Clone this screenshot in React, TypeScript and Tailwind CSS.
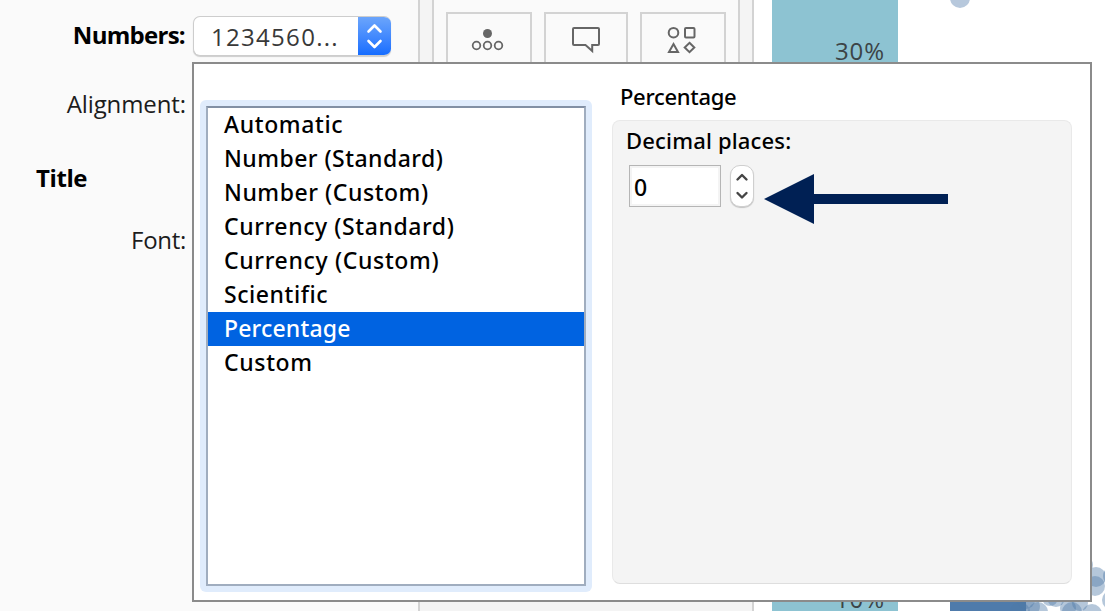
const formats = [
  { name: 'Automatic', tracking: 'tracking-[0.62px]' },
  { name: 'Number (Standard)', tracking: 'tracking-[0.46px]' },
  { name: 'Number (Custom)', tracking: 'tracking-[0.55px]' },
  { name: 'Currency (Standard)', tracking: 'tracking-[0.58px]' },
  { name: 'Currency (Custom)', tracking: 'tracking-[0.65px]' },
  { name: 'Scientific', tracking: 'tracking-[0.55px]' },
  { name: 'Percentage', tracking: 'tracking-[0.17px]' },
  { name: 'Custom', tracking: 'tracking-[0.65px]' },
];

const dots: [number, number, number][] = [
  [330, 565, 9], [342, 577, 10], [341, 586, 10], [359, 576, 10], [358, 600, 10],
  [338, 614, 10], [318, 612, 10], [314, 608, 8], [296, 598, 8], [284, 612, 10],
  [276, 606, 10], [302, 598, 9], [266, 612, 10], [326, 603, 8], [272, 600, 9],
];

function FormatPane() {
  return (
    <section className="w-[418px] shrink-0 bg-[#fafafa]">
      <div className="flex h-[72px] items-start justify-end pr-[27px] pt-4">
        <div className="mr-2 mt-[2px] text-[24px] font-bold leading-[34px] tracking-[-0.72px]">Numbers:</div>
        <div className="flex h-10 w-[198px] overflow-hidden rounded-[7px] border border-r-0 border-[#cdcdcd] bg-white shadow-[0_1px_1px_rgba(0,0,0,0.18)]">
          <div className="flex-1 pl-[17px] pt-[3px] text-[24px] leading-[34px] tracking-[1.3px] text-[#383838]">1234560...</div>
          <div className="-my-px w-[33px] bg-linear-to-b from-[#6da6fb] to-[#116bff]">
            <svg width="33" height="40" fill="none" stroke="#fff" strokeWidth="2.6" strokeLinecap="round" strokeLinejoin="round">
              <path d="M10.5 15.5 16.5 9.5 22.5 15.5M10.5 25 16.5 31 22.5 25" />
            </svg>
          </div>
        </div>
      </div>
      <div className="mt-[15px] w-[186px] text-right text-[24px] leading-[34px] tracking-[-0.1px] text-[#1c1c1c]">Alignment:</div>
      <div className="mt-[40px] pl-9 text-[24px] font-bold leading-[34px] tracking-[-0.4px]">Title</div>
      <div className="mt-[28px] w-[186px] text-right text-[24px] leading-[34px] tracking-[-0.3px] text-[#1c1c1c]">Font:</div>
    </section>
  );
}

function MarksCard() {
  return (
    <section className="w-[336px] shrink-0 border-x-2 border-[#d3d3d3] bg-[#f4f4f4] px-3">
      <div className="flex h-[300px] gap-3 border-x-2 border-[#d3d3d3] bg-[#fafafa] px-3 pt-3">
        <div className="h-20 w-[86px] border-2 border-[#d3d3d3]">
          <svg width="82" height="76" fill="none" stroke="#666" strokeWidth="1.8">
            <circle cx="39.5" cy="19.5" r="4.5" fill="#666" stroke="none" />
            <circle cx="28.5" cy="31.5" r="3.8" />
            <circle cx="39.5" cy="31.5" r="3.8" />
            <circle cx="50.5" cy="31.5" r="3.8" />
          </svg>
        </div>
        <div className="h-20 w-[84px] border-2 border-[#d3d3d3]">
          <svg width="80" height="76" fill="none" stroke="#666" strokeWidth="2">
            <path d="M29 14H52Q53 14 53 15V30Q53 31 52 31H46.2V37L39.5 31H28Q27 31 27 30V15Q27 14 28 14Z" />
          </svg>
        </div>
        <div className="h-20 w-[86px] border-2 border-[#d3d3d3]">
          <svg width="82" height="76" fill="none" stroke="#666" strokeWidth="2">
            <circle cx="31.5" cy="18.7" r="4.8" />
            <rect x="43" y="14" width="9.5" height="9.5" rx="1" />
            <path d="M31.5 30 36 38H27ZM47.5 28.8 52.3 33.5 47.5 38.2 42.7 33.5Z" />
          </svg>
        </div>
      </div>
    </section>
  );
}

function Chart() {
  return (
    <svg className="shrink-0 bg-white" width="351" height="611">
      <rect x="18" width="126" height="611" fill="#8dc3d2" />
      <text x="131" y="60" textAnchor="end" fontSize="24" letterSpacing="0.9" fill="#3c4446">30%</text>
      <text x="131" y="608" textAnchor="end" fontSize="24" letterSpacing="0.9" fill="#3c4446">10%</text>
      <circle cx="206" cy="-2" r="10" fill="#b7c8dc" />
      <rect x="196" y="600" width="76" height="11" fill="#4f7bab" />
      {dots.map(([x, y, r], i) => (
        <circle key={i} cx={x} cy={y} r={r} fill="#4e79a7" fillOpacity="0.42" />
      ))}
    </svg>
  );
}

function FormatDialog() {
  return (
    <div className="absolute left-[192px] top-[62px] flex h-[540px] w-[900px] border-2 border-[#8b8b8b] bg-white font-['Noto_Sans',sans-serif] text-[22px] font-medium">
      <div className="ml-[6px] mt-9 h-[492px] w-[392px] shrink-0 rounded-[6px] bg-[#e0ecfc] p-[6px]">
        <ul className="h-[480px] border-2 border-[#a0adbf] border-t-[#8290a4] bg-white text-[23px]">
          {formats.map(({ name, tracking }) => (
            <li
              key={name}
              className={`h-[34px] whitespace-nowrap pl-4 leading-[32px] ${tracking} ${name === 'Percentage' ? 'bg-[#0063e1] text-white' : 'text-black'}`}
            >
              {name}
            </li>
          ))}
        </ul>
      </div>
      <div className="ml-5 mt-4">
        <h2 className="h-10 pl-2 leading-[32px] tracking-[-0.3px]">Percentage</h2>
        <div className="h-[464px] w-[460px] rounded-[8px] border border-[#e9e9e9] border-b-[#dedede] bg-[#f4f4f4]">
          <div className="h-11 pl-[13px] pt-[3px] leading-[32px] tracking-[0.17px]">Decimal places:</div>
          <div className="flex pl-4">
            <div className="h-[42px] w-[92px] border border-[#b5b5b5] bg-white pl-[4px] text-[23px] leading-[42px] shadow-[inset_0_0_0_2px_#f4f4f4]">0</div>
            <div className="ml-[9px] h-[42px] w-6 rounded-[10px] border border-[#cfcfcf] bg-white shadow-[0_1px_1px_rgba(0,0,0,0.2)]">
              <svg width="22" height="40" fill="none" stroke="#454545" strokeWidth="2.4" strokeLinecap="round" strokeLinejoin="round">
                <path d="M6.5 13.5 11 9 15.5 13.5M6.5 27 11 31.5 15.5 27" />
              </svg>
            </div>
            <svg className="ml-[10px] mt-[8px]" width="184" height="51" fill="#002054">
              <path d="M0 26 50 1V21H184V31H50V51Z" />
            </svg>
          </div>
        </div>
      </div>
    </div>
  );
}

export default function App() {
  return (
    <main className="relative flex h-[611px] w-[1105px] overflow-hidden bg-white font-['Open_Sans','Noto_Sans',sans-serif] text-black">
      <FormatPane />
      <MarksCard />
      <Chart />
      <FormatDialog />
    </main>
  );
}
